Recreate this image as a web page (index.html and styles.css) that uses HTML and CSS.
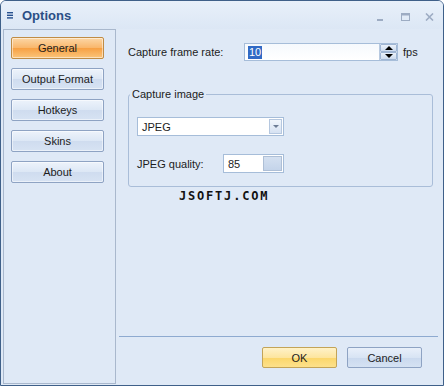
FILE: index.html
```html
<!DOCTYPE html>
<html lang="en">
<head>
  <meta charset="UTF-8">
  <title>Options</title>
  <link rel="stylesheet" href="styles.css">
</head>
<body>
  <div class="window">
    <div class="titlebar">
      <svg class="menu-icon" width="7" height="7" viewBox="0 0 7 7">
        <rect x="0" y="0" width="6" height="1.4" fill="#27508e"/>
        <rect x="0" y="2.6" width="6" height="1.4" fill="#27508e"/>
        <rect x="0" y="5.2" width="6" height="1.4" fill="#27508e"/>
      </svg>
      <span class="title">Options</span>
      <div class="controls">
        <svg width="8" height="8" viewBox="0 0 8 8"><rect x="1" y="6" width="6" height="2" fill="#9dacc3"/></svg>
        <svg width="9" height="8" viewBox="0 0 9 8"><rect x="0.5" y="0.5" width="8" height="7" fill="none" stroke="#9dacc3"/><rect x="0" y="0" width="9" height="2.5" fill="#9dacc3"/></svg>
        <svg width="9" height="8" viewBox="0 0 9 8"><path d="M1 0.5 L8 7.5 M8 0.5 L1 7.5" stroke="#9dacc3" stroke-width="1.6"/></svg>
      </div>
    </div>

    <div class="body">
      <div class="sidebar">
        <button class="nav-btn active">General</button>
        <button class="nav-btn">Output Format</button>
        <button class="nav-btn">Hotkeys</button>
        <button class="nav-btn">Skins</button>
        <button class="nav-btn">About</button>
      </div>

      <div class="main">
        <div class="settings">
          <div class="row">
            <label class="row-label">Capture frame rate:</label>
            <div class="spin-input">
              <div class="field"><span class="selected">10</span></div>
              <div class="spin">
                <span class="spin-half"><span class="arrow-up"></span></span>
                <span class="spin-half"><span class="arrow-down"></span></span>
              </div>
            </div>
            <span class="unit">fps</span>
          </div>

          <fieldset class="group">
            <legend>Capture image</legend>
            <div class="combo">
              <span class="combo-text">JPEG</span>
              <span class="combo-btn"><span class="arrow-small"></span></span>
            </div>
            <div class="quality-row">
              <label class="quality-label">JPEG quality:</label>
              <div class="quality-input">
                <span class="quality-text">85</span>
                <span class="quality-btn"></span>
              </div>
            </div>
          </fieldset>

          <div class="watermark">JSOFTJ.COM</div>
        </div>

        <div class="footer">
          <button class="dlg-btn ok">OK</button>
          <button class="dlg-btn">Cancel</button>
        </div>
      </div>
    </div>
  </div>
</body>
</html>
```

FILE: styles.css
```css
body {
  margin: 0;
  padding: 0;
  background: #ffffff;
  font-family: 'Liberation Sans', Arial, sans-serif;
  font-size: 11px;
  color: #1c1c1c;
}

.window {
  width: 444px;
  height: 386px;
  box-sizing: border-box;
  border: 1px solid #3f6089;
  border-radius: 6px 6px 0 0;
  background: #dfe9f6;
  display: flex;
  flex-direction: column;
  overflow: hidden;
}

/* title bar */
.titlebar {
  height: 28px;
  flex-shrink: 0;
  display: flex;
  align-items: center;
  padding-left: 6px;
  background: linear-gradient(#e8f0fa, #dce7f5);
}

.menu-icon {
  margin-top: 1px;
}

.title {
  margin-left: 8px;
  font-size: 13px;
  font-weight: bold;
  color: #2b4f85;
}

.controls {
  margin-left: auto;
  display: flex;
  align-items: center;
  gap: 15px;
  padding-right: 9px;
  padding-top: 3px;
}

.controls svg:first-child {
  margin-right: 2px;
}

/* content area */
.body {
  flex: 1;
  display: flex;
  padding: 0 1px 1px 2px;
}

.sidebar {
  width: 113px;
  box-sizing: border-box;
  border: 1px solid #a9b8cd;
  padding: 7px 0 0 7px;
  display: flex;
  flex-direction: column;
  gap: 9px;
}

.nav-btn {
  width: 93px;
  height: 22px;
  padding: 0;
  font-family: inherit;
  font-size: 11px;
  color: #1c1c1c;
  border: 1px solid #8ea3c3;
  border-radius: 2px;
  background: linear-gradient(#edf3fb 0%, #dce7f5 50%, #cfdcef 51%, #d7e3f3 100%);
  box-shadow: inset 0 0 0 1px rgba(255, 255, 255, 0.5);
}

.nav-btn.active {
  border-color: #c08c45;
  background: linear-gradient(#fcd7a6 0%, #f9b66a 50%, #f7a043 51%, #fbc57a 100%);
}

.main {
  flex: 1;
  display: flex;
  flex-direction: column;
}

.settings {
  flex: 1;
  padding: 14px 9px 0 12px;
}

.row {
  display: flex;
  align-items: center;
  height: 18px;
}

.row-label {
  width: 116px;
}

.spin-input {
  display: flex;
  width: 154px;
  height: 18px;
  box-sizing: border-box;
  border: 1px solid #a6bdd9;
  background: linear-gradient(#f6f9fd, #ffffff);
}

.field {
  flex: 1;
  padding-left: 3px;
  display: flex;
  align-items: center;
}

.selected {
  background: #316ac5;
  color: #ffffff;
  padding: 0 1px;
  line-height: 13px;
}

.spin {
  width: 17px;
  display: flex;
  flex-direction: column;
  border-left: 1px solid #b7c9e0;
}

.spin-half {
  flex: 1;
  display: flex;
  align-items: center;
  justify-content: center;
  background: linear-gradient(#eaf1fa, #cddbee);
  border: 1px solid #9fb5d3;
  border-radius: 1px;
}

.arrow-up {
  width: 0;
  height: 0;
  border-left: 4px solid transparent;
  border-right: 4px solid transparent;
  border-bottom: 4px solid #000000;
}

.arrow-down {
  width: 0;
  height: 0;
  border-left: 4px solid transparent;
  border-right: 4px solid transparent;
  border-top: 4px solid #000000;
}

.unit {
  margin-left: 5px;
}

/* group box */
.group {
  margin: 27px 0 0 0;
  padding: 0 8px 13px 8px;
  border: 1px solid #a9bdd8;
  border-radius: 3px;
}

.group legend {
  margin-left: -7px;
  padding: 0 2px;
  color: #1c1c1c;
}

.combo {
  margin-top: 17px;
  width: 147px;
  height: 19px;
  box-sizing: border-box;
  border: 1px solid #a6bdd9;
  background: #ffffff;
  display: flex;
  align-items: center;
  padding: 0 1px 0 4px;
}

.combo-text {
  flex: 1;
}

.combo-btn {
  width: 13px;
  height: 15px;
  box-sizing: border-box;
  border: 1px solid #b5c7df;
  background: linear-gradient(#f1f6fc, #d6e2f2);
  display: flex;
  align-items: center;
  justify-content: center;
}

.arrow-small {
  width: 0;
  height: 0;
  border-left: 3px solid transparent;
  border-right: 3px solid transparent;
  border-top: 3px solid #6d7d95;
}

.quality-row {
  margin-top: 18px;
  display: flex;
  align-items: center;
}

.quality-label {
  width: 86px;
}

.quality-input {
  width: 61px;
  height: 19px;
  box-sizing: border-box;
  border: 1px solid #a6bdd9;
  background: #ffffff;
  display: flex;
  align-items: center;
  padding: 0 1px 0 4px;
}

.quality-text {
  flex: 1;
}

.quality-btn {
  width: 19px;
  height: 15px;
  box-sizing: border-box;
  border: 1px solid #aebfd6;
  background: linear-gradient(#d4e0f0, #c4d4ea);
}

.watermark {
  margin: 2px 0 0 51px;
  font-family: 'DejaVu Sans Mono', 'Liberation Mono', monospace;
  font-weight: bold;
  font-size: 12px;
  letter-spacing: 1.8px;
  color: #111111;
}

/* footer */
.footer {
  margin: 0 4px 0 3px;
  border-top: 1px solid #8eaad0;
  padding: 10px 16px 16px 0;
  display: flex;
  justify-content: flex-end;
  gap: 10px;
}

.dlg-btn {
  width: 75px;
  height: 21px;
  padding: 0;
  font-family: inherit;
  font-size: 11px;
  color: #1c1c1c;
  border: 1px solid #8ea3c3;
  border-radius: 2px;
  background: linear-gradient(#e9f0fa 0%, #d8e4f4 50%, #cad9ee 51%, #d5e2f3 100%);
}

.dlg-btn.ok {
  border-color: #c3a458;
  background: linear-gradient(#fff2c8 0%, #fde59f 50%, #fbd66a 51%, #fde18b 100%);
}
```
